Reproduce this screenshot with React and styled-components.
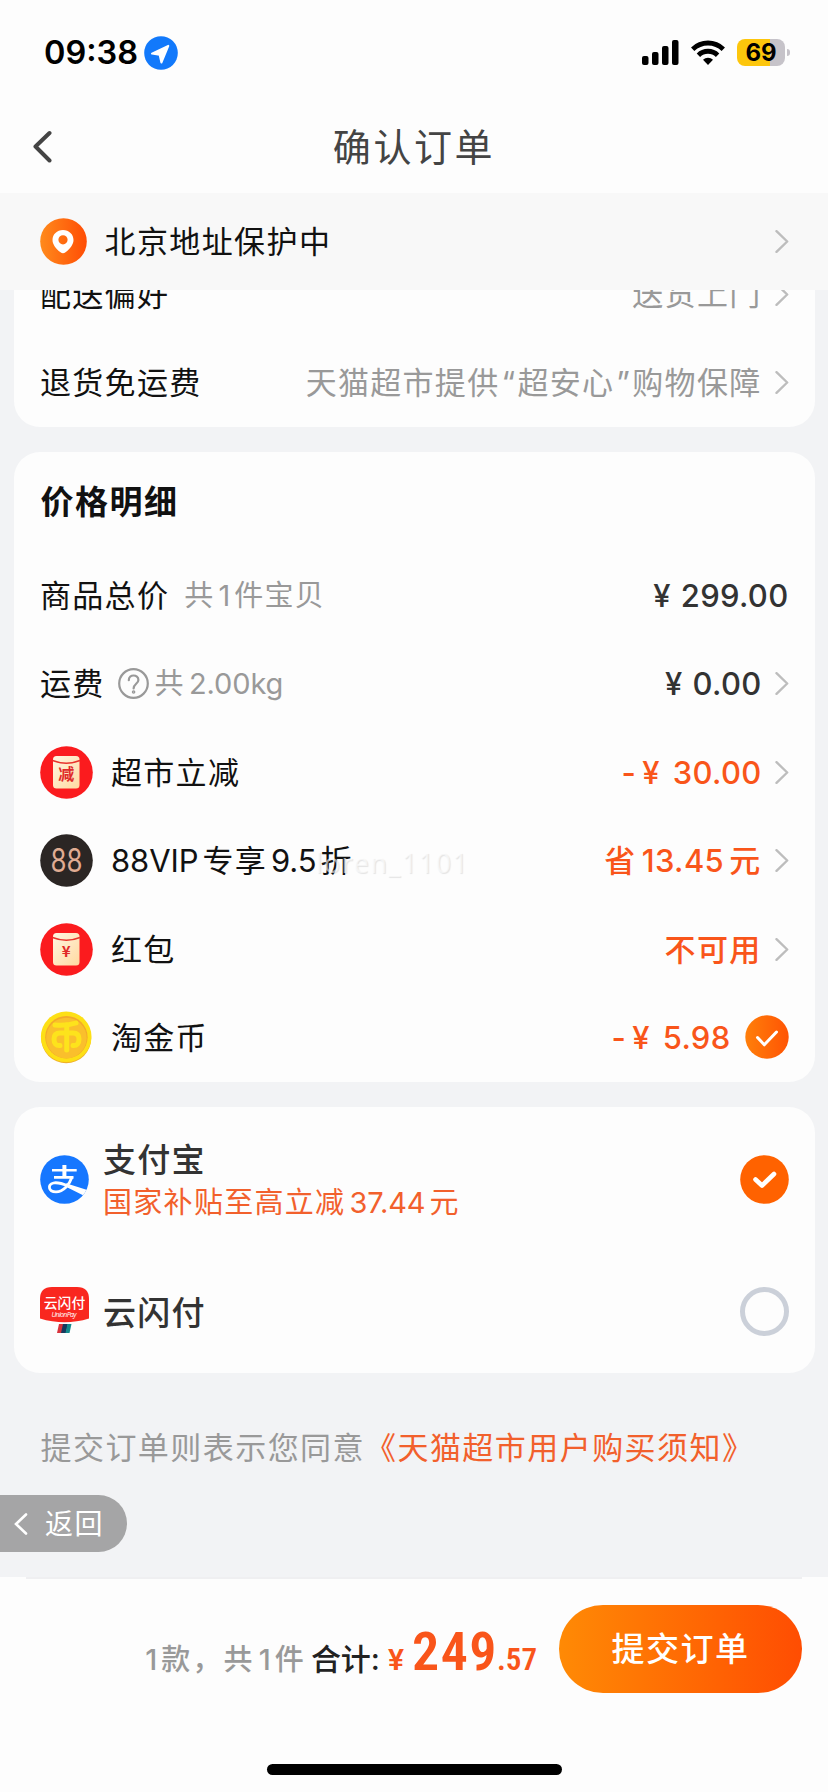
import React from "react";
import styled, { createGlobalStyle } from "styled-components";

function App() {
  return (
    <Screen lang="zh-CN">
      <GlobalStyle />
      <StatusBar>
        <Time>09:38</Time>
        <LocationIcon />
        <StatusIcons>
          <SignalIcon />
          <WifiIcon />
          <Battery>
            <BatteryBody>69</BatteryBody>
            <BatteryCap />
          </Battery>
        </StatusIcons>
      </StatusBar>

      <NavBar>
        <BackChevron width="20" height="34" viewBox="0 0 20 34">
          <path d="M17.5 3 3.5 16.5 17.5 30.5" />
        </BackChevron>
        <NavTitle>确认订单</NavTitle>
      </NavBar>

      <AddressBar>
        <PinIcon />
        <AddressText>北京地址保护中</AddressText>
        <Arrow />
      </AddressBar>

      <Body>
        <Card $lead>
          <Row>
            <Label>配送偏好</Label>
            <Value $muted>送货上门</Value>
            <Arrow />
          </Row>
          <Row>
            <Label>退货免运费</Label>
            <Value $muted>
              天猫超市提供<Quote>“</Quote>超安心<Quote>”</Quote>购物保障
            </Value>
            <Arrow />
          </Row>
        </Card>

        <Card>
          <CardTitle>价格明细</CardTitle>
          <Row>
            <Label>商品总价</Label>
            <Note>
              共<Num>1</Num>件宝贝
            </Note>
            <Value>
              <Yen>¥</Yen>299.00
            </Value>
          </Row>
          <Row>
            <Label>运费</Label>
            <HelpIcon />
            <Note $tight>
              共<Num>2.00kg</Num>
            </Note>
            <Value>
              <Yen>¥</Yen>0.00
            </Value>
            <Arrow />
          </Row>
          <Row>
            <PacketIcon mark="减" size={16} />
            <Label $withIcon>超市立减</Label>
            <Value $hot>
              -<Yen $discount>¥</Yen>30.00
            </Value>
            <Arrow />
          </Row>
          <Row>
            <VipIcon />
            <Label $withIcon>
              <Num $first>88VIP</Num>专享<Num>9.5</Num>折
            </Label>
            <Watermark>loren_1101</Watermark>
            <Value $hot $text>
              省<Num>13.45</Num>元
            </Value>
            <Arrow />
          </Row>
          <Row>
            <PacketIcon mark="¥" size={15} />
            <Label $withIcon>红包</Label>
            <Value $hot $text>
              不可用
            </Value>
            <Arrow />
          </Row>
          <Row>
            <CoinIcon />
            <Label $withIcon>淘金币</Label>
            <Value $hot>
              -<Yen $discount>¥</Yen>5.98
            </Value>
            <CoinCheck />
          </Row>
        </Card>

        <Card>
          <PayRow>
            <AlipayIcon />
            <PayInfo>
              <PayName>支付宝</PayName>
              <PayPromo>
                国家补贴至高立减<Num>37.44</Num>元
              </PayPromo>
            </PayInfo>
            <RadioChecked />
          </PayRow>
          <PayRow>
            <UnionPayIcon />
            <PayInfo>
              <PayName>云闪付</PayName>
            </PayInfo>
            <Radio />
          </PayRow>
        </Card>

        <Agreement>
          提交订单则表示您同意<Link>《天猫超市用户购买须知》</Link>
        </Agreement>

        <BackPill>
          <svg width="14" height="22" viewBox="0 0 14 22">
            <path
              d="M12 1.5 2 11 12 20.5"
              fill="none"
              stroke="#fff"
              strokeWidth="2.6"
              strokeLinecap="round"
            />
          </svg>
          返回
        </BackPill>
      </Body>

      <Footer>
        <Divider />
        <FooterRow>
          <Summary>
            <Count>
              <Num $first>1</Num>款，共<Num>1</Num>件
            </Count>
            <TotalLabel>合计:</TotalLabel>
            <Currency>¥</Currency>
            <Amount>249</Amount>
            <Cents>.57</Cents>
          </Summary>
          <SubmitButton>提交订单</SubmitButton>
        </FooterRow>
        <HomeIndicator />
      </Footer>
    </Screen>
  );
}

export default App;

const LocationIcon = () => (
  <svg width="34" height="34" viewBox="0 0 34 34">
    <circle cx="17" cy="17" r="16.8" fill="#1279fb" />
    <path
      d="M24.3 9.8 8 17.6l7.6 1.1 1.8 7.8z"
      fill="#fff"
      stroke="#fff"
      strokeWidth="2"
      strokeLinejoin="round"
    />
  </svg>
);

const SignalIcon = () => (
  <svg width="37" height="25" viewBox="0 0 37 25">
    <rect x="0" y="16" width="6.5" height="9" rx="2" />
    <rect x="10" y="12" width="6.5" height="13" rx="2" />
    <rect x="20" y="6" width="6.5" height="19" rx="2" />
    <rect x="30" y="0" width="6.5" height="25" rx="2" />
  </svg>
);

const WifiIcon = () => (
  <svg width="34" height="25" viewBox="0 0 34 25">
    <g fill="none" stroke="#000" strokeWidth="4.8">
      <path d="M1.7 9.2a22 22 0 0 1 30.6 0" />
      <path d="M7.4 15.2a13.7 13.7 0 0 1 19.2 0" />
    </g>
    <path d="M17 25l-5-5.2a7.2 7.2 0 0 1 10 0z" />
  </svg>
);

const PinIcon = () => (
  <svg width="47" height="47" viewBox="0 0 47 47">
    <defs>
      <linearGradient id="pin" x1="0" y1="0" x2="1" y2="0">
        <stop offset="0" stopColor="#ff8a1c" />
        <stop offset="1" stopColor="#ff4d05" />
      </linearGradient>
    </defs>
    <circle cx="23.5" cy="23.5" r="23.3" fill="url(#pin)" />
    <path
      fill="#fff"
      fillRule="evenodd"
      d="M23 12c6 0 10.5 4.4 10.5 9.9 0 4.5-3.3 8.4-8 12.4q-2.5 2-5 0c-4.7-4-8-7.9-8-12.4C12.5 16.4 17 12 23 12zm0 5.2a4.6 4.6 0 1 0 0 9.2 4.6 4.6 0 0 0 0-9.2z"
    />
  </svg>
);

const HelpIcon = () => (
  <HelpSvg width="31" height="31" viewBox="0 0 31 31">
    <circle cx="15.5" cy="15.5" r="14.3" />
    <path d="M10.8 12.2c0-6.3 9.6-6.1 9.6-.3 0 3.9-4.8 4-4.8 8.6" />
    <circle cx="15.6" cy="24" r=".7" />
  </HelpSvg>
);

const PacketIcon = ({ mark, size }) => (
  <svg width="53" height="53" viewBox="0 0 53 53">
    <defs>
      <linearGradient id="packet" x1="0" y1="0" x2="1" y2="1">
        <stop offset="0" stopColor="#fff6e2" />
        <stop offset="1" stopColor="#ffd9a0" />
      </linearGradient>
    </defs>
    <circle cx="26.5" cy="26.5" r="26.3" fill="#fb1b1e" />
    <rect x="13" y="10" width="26.5" height="32.5" rx="3.5" fill="url(#packet)" />
    <path d="M12.5 14.5Q26.5 20 40 14.5" fill="none" stroke="#e8332c" strokeWidth="1.4" />
    <IconText x="26.3" y={28.5 + size * 0.37} fontSize={size} fill="#e02a2a">
      {mark}
    </IconText>
  </svg>
);

const VipIcon = () => (
  <svg width="53" height="53" viewBox="0 0 53 53">
    <circle cx="26.5" cy="26.5" r="26.3" fill="#2b2624" />
    <text
      x="10.5"
      y="37.8"
      fontFamily="Inter"
      fontSize="32"
      fill="#e0ac92"
      textLength="32"
      lengthAdjust="spacingAndGlyphs"
    >
      88
    </text>
  </svg>
);

const CoinIcon = () => (
  <svg width="53" height="53" viewBox="0 0 53 53">
    <circle cx="26.2" cy="27.2" r="25" fill="#efb22a" />
    <circle cx="26.2" cy="25.8" r="25.3" fill="#fde016" />
    <circle cx="26.4" cy="26.2" r="21.2" fill="#f3a92a" />
    <circle cx="26.4" cy="27" r="20.3" fill="#fabf2c" />
    <g fill="none" stroke="#fde31c" strokeWidth="5" strokeLinecap="round">
      <path d="M15 14q12 1 21-2" />
      <path d="M20 34.5q-6 .5-6-6.5 0-6 6-6h13q6 0 6 6 0 7-6 6.5" />
      <path d="M26.7 14v25" />
    </g>
  </svg>
);

const CoinCheck = () => (
  <CheckSvg width="44" height="44" viewBox="0 0 44 44">
    <defs>
      <linearGradient id="coinCheck" x1="0" y1="0" x2="1" y2="0">
        <stop offset="0" stopColor="#ff7f0a" />
        <stop offset="1" stopColor="#ff5404" />
      </linearGradient>
    </defs>
    <circle cx="22" cy="22" r="21.7" fill="url(#coinCheck)" />
    <path d="M12.5 22.5l6.8 7.3L31.5 17" strokeWidth="3" />
  </CheckSvg>
);

const RadioChecked = () => (
  <CheckSvg width="49" height="49" viewBox="0 0 49 49">
    <circle cx="24.5" cy="24.5" r="24.3" fill="#ff6200" />
    <path d="M15.5 24.5l6.5 6L34 19" strokeWidth="4.6" />
  </CheckSvg>
);

const AlipayIcon = () => (
  <svg width="49" height="49" viewBox="0 0 49 49">
    <clipPath id="alipay">
      <circle cx="24.5" cy="24.5" r="24.3" />
    </clipPath>
    <g clipPath="url(#alipay)" fill="none" stroke="#fff">
      <rect width="49" height="49" fill="#1677ff" stroke="none" />
      <path d="M12 15.3h24.7M14 22.4h19.5" strokeWidth="2.6" />
      <path d="M24.4 10v12" strokeWidth="4" />
      <path
        d="M32 22c-2.5 7.5-8.5 14.8-16 14.8-8 0-8.5-7.3-2.5-8.8 5.5-1.3 12 2 17 4"
        strokeWidth="2.8"
      />
      <path d="M26 28.3l22 7-2 6.5-18.5-9.3z" fill="#fff" stroke="none" />
    </g>
  </svg>
);

const UnionPayIcon = () => (
  <svg width="49" height="49" viewBox="0 0 49 49">
    <path d="M0 12Q0 0 12 0h25q12 0 12 12v19.5q-24.5 7.5-49 0z" fill="#f9271f" />
    <IconText $medium x="24.5" y="21" fontSize="13.8" fill="#fff">
      云闪付
    </IconText>
    <text
      x="11.5"
      y="29.5"
      fontFamily="Open Sans"
      fontStyle="italic"
      fontSize="7"
      fill="#fff"
      textLength="25"
    >
      UnionPay
    </text>
    <path d="M19 37h5l-2 9h-5z" fill="#d8333c" />
    <path d="M23 37h5l-2 9h-5z" fill="#173a5e" />
    <path d="M27.5 37h4l-2 9h-4z" fill="#148a8c" />
  </svg>
);

const Arrow = () => (
  <ArrowSvg width="14" height="23" viewBox="0 0 14 23">
    <path d="M1.5 1.2 12.2 11.5 1.5 21.8" />
  </ArrowSvg>
);

const GlobalStyle = createGlobalStyle`
  * {
    box-sizing: border-box;
  }

  body {
    margin: 0;
    font-family: Inter, "Noto Sans CJK SC", sans-serif;
  }
`;

const Screen = styled.div`
  width: 828px;
  height: 1792px;
  display: flex;
  flex-direction: column;
  overflow: hidden;
  background: #f2f3f5;
  color: #111;
`;

const StatusBar = styled.header`
  height: 105px;
  padding: 0 38px 0 44px;
  display: flex;
  align-items: center;
  background: #fdfdfd;
`;

const Time = styled.span`
  width: 99.5px;
  font-size: 32.5px;
  font-weight: 600;
  line-height: 40px;
  color: #000;
`;

const StatusIcons = styled.div`
  margin-left: auto;
  display: flex;
  align-items: center;
  gap: 12px;
`;

const Battery = styled.div`
  display: flex;
  align-items: center;
  gap: 2px;
`;

const BatteryBody = styled.div`
  width: 48px;
  height: 27px;
  border-radius: 8px;
  background: linear-gradient(90deg, #fdc60c 68%, #c6c3c9 68%);
  color: #000;
  font-size: 24px;
  font-weight: 700;
  line-height: 27px;
  text-align: center;
`;

const BatteryCap = styled.div`
  width: 3px;
  height: 7px;
  border-radius: 0 3px 3px 0;
  background: #c6c3c9;
`;

const NavBar = styled.nav`
  height: 88px;
  padding: 0 32px 4px;
  display: grid;
  grid-template-columns: 20px 1fr 20px;
  align-items: center;
  background: #fdfdfd;
`;

const BackChevron = styled.svg`
  fill: none;
  stroke: #444;
  stroke-width: 4;
  stroke-linecap: round;
  stroke-linejoin: round;
`;

const NavTitle = styled.h1`
  margin: 0;
  font-size: 38px;
  font-weight: 400;
  letter-spacing: 2.6px;
  line-height: 50px;
  text-align: center;
  color: #444;
`;

const AddressBar = styled.div`
  height: 97px;
  padding: 0 39px 0 40px;
  display: flex;
  align-items: center;
  background: #f8f8f8;
`;

const AddressText = styled.div`
  flex: 1;
  margin-left: 17.5px;
  font-size: 31px;
  letter-spacing: 1.4px;
  line-height: 44px;
`;

const Body = styled.main`
  position: relative;
  flex: 1;
  padding: 0 13.5px;
  overflow: hidden;
`;

const Card = styled.section`
  margin-top: ${(props) => (props.$lead ? "-40px" : "0")};
  margin-bottom: 25.5px;
  border-radius: 26px;
  background: #fdfdfd;
  overflow: hidden;
`;

const CardTitle = styled.h2`
  height: 99px;
  margin: 0;
  padding: 1px 0 0 27px;
  font-size: 33px;
  font-weight: 700;
  letter-spacing: 1.5px;
  line-height: 99px;
`;

const Row = styled.div`
  position: relative;
  height: 88.4px;
  padding: 0 26px 0 26.5px;
  display: flex;
  align-items: center;
`;

const Label = styled.span`
  margin-left: ${(props) => (props.$withIcon ? "18px" : "0")};
  padding-top: 1px;
  font-size: 31px;
  letter-spacing: 1.3px;
  line-height: 44px;
  white-space: nowrap;
`;

const Note = styled.span`
  margin-left: ${(props) => (props.$tight ? "6px" : "15px")};
  padding-top: 1px;
  font-size: 29px;
  letter-spacing: 1.3px;
  line-height: 44px;
  color: #999;
`;

const Num = styled.span`
  margin: ${(props) => (props.$first ? "0 4px 0 0" : "0 4px")};
  letter-spacing: -0.1px;
`;

const Quote = styled.span`
  margin: 0 1px 0 2px;
`;

const Yen = styled.span`
  margin-left: ${(props) => (props.$discount ? "6px" : "0")};
  margin-right: ${(props) => (props.$discount ? "13px" : "10px")};
`;

const Value = styled.span`
  margin-left: auto;
  padding-top: ${(props) => (props.$muted ? "0" : "1px")};
  font-size: 31px;
  font-weight: ${(props) => (props.$muted ? 400 : 500)};
  letter-spacing: ${(props) => (props.$muted || props.$text ? "1.3px" : "0.3px")};
  line-height: 44px;
  color: ${(props) => (props.$hot ? "#f9551a" : props.$muted ? "#999" : "#333")};
  white-space: nowrap;

  ${Num} {
    margin: 0 5px;
    letter-spacing: 0.4px;
  }
`;

const Watermark = styled.span`
  position: absolute;
  left: 302px;
  top: 28px;
  font-family: "Noto Sans", sans-serif;
  font-size: 27px;
  letter-spacing: 1.4px;
  line-height: 37px;
  color: rgba(255, 255, 255, 0.6);
  text-shadow: 1px 1px 1px rgba(0, 0, 0, 0.1);
`;

const ArrowSvg = styled.svg`
  flex: none;
  margin-left: 13px;
  fill: none;
  stroke: #bdbdbd;
  stroke-width: 2.4;
  stroke-linecap: round;
  stroke-linejoin: round;
`;

const HelpSvg = styled.svg`
  margin-left: 13px;
  fill: none;
  stroke: #999;
  stroke-width: 2.2;
  stroke-linecap: round;
`;

const CheckSvg = styled.svg`
  flex: none;
  margin-left: 14px;

  path {
    fill: none;
    stroke: #fff;
    stroke-linecap: round;
    stroke-linejoin: round;
  }
`;

const IconText = styled.text`
  font-family: "Noto Sans CJK SC", sans-serif;
  font-weight: ${(props) => (props.$medium ? 500 : 700)};
  text-anchor: middle;
`;

const PayRow = styled.div`
  height: 133px;
  padding: 12px 26px 0 26.5px;
  display: flex;
  align-items: center;

  & + & {
    padding-top: 10px;
  }
`;

const PayInfo = styled.div`
  flex: 1;
  margin-left: 14px;
  padding-top: 3px;
`;

const PayName = styled.div`
  font-size: 33px;
  font-weight: 500;
  letter-spacing: 1.2px;
  line-height: 43px;
  color: #333;
`;

const PayPromo = styled.div`
  font-size: 29px;
  letter-spacing: 1.3px;
  line-height: 41px;
  color: #f2602c;
`;

const Radio = styled.div`
  width: 49px;
  height: 49px;
  border: 5px solid #cbd0d9;
  border-radius: 50%;
`;

const Agreement = styled.p`
  margin: 51px 0 0 27px;
  font-size: 31px;
  letter-spacing: 1.45px;
  line-height: 48px;
  white-space: nowrap;
  color: #999;
`;

const Link = styled.a`
  color: #f2602c;
`;

const BackPill = styled.button`
  position: absolute;
  left: 0;
  top: 1205px;
  width: 127px;
  height: 57px;
  padding: 0 0 0 14px;
  border: 0;
  border-radius: 0 29px 29px 0;
  display: flex;
  align-items: center;
  gap: 17px;
  background: #a5a5a6;
  color: #fff;
  font: 28px/40px Inter, "Noto Sans CJK SC", sans-serif;
  letter-spacing: 1.5px;
  white-space: nowrap;
`;

const Footer = styled.footer`
  height: 215px;
  display: flex;
  flex-direction: column;
  align-items: center;
  background: #fdfdfd;
`;

const Divider = styled.div`
  width: 776px;
  height: 2px;
  background: #efeff1;
`;

const FooterRow = styled.div`
  width: 100%;
  padding: 26px 26px 0 0;
  display: flex;
  justify-content: flex-end;
  align-items: center;
`;

const Summary = styled.div`
  margin-right: 22px;
  padding-top: 4px;
  display: flex;
  align-items: baseline;
  white-space: nowrap;
`;

const Count = styled.span`
  font-size: 29px;
  font-weight: 500;
  letter-spacing: 2.2px;
  color: #999;
`;

const TotalLabel = styled.span`
  margin-left: 5px;
  font-size: 30px;
  font-weight: 500;
  color: #222;
`;

const Currency = styled.span`
  margin-left: 8px;
  font-family: Roboto, sans-serif;
  font-size: 30px;
  font-weight: 600;
  color: #f9551a;
`;

const Amount = styled.span`
  margin-left: 8px;
  font-family: Roboto, sans-serif;
  font-size: 54px;
  font-weight: 600;
  font-stretch: 85%;
  letter-spacing: 1.5px;
  color: #f9551a;
`;

const Cents = styled(Amount)`
  margin-left: -1px;
  font-size: 31px;
  letter-spacing: 0;
`;

const SubmitButton = styled.button`
  width: 243px;
  height: 88px;
  padding: 0;
  border: 0;
  border-radius: 44px;
  background: linear-gradient(90deg, #ff8a05, #ff4d02);
  color: #fff;
  font: 500 33px/46px Inter, "Noto Sans CJK SC", sans-serif;
  letter-spacing: 1.5px;
`;

const HomeIndicator = styled.div`
  width: 295px;
  height: 11px;
  margin-top: 71px;
  border-radius: 6px;
  background: #000;
`;
